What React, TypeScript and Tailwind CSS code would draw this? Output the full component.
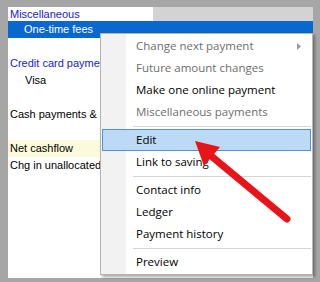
type MenuEntry =
  | { kind: 'item'; label: string; disabled?: boolean; active?: boolean; submenu?: boolean }
  | { kind: 'sep' };

const menu: MenuEntry[] = [
  { kind: 'item', label: 'Change next payment', disabled: true, submenu: true },
  { kind: 'item', label: 'Future amount changes', disabled: true },
  { kind: 'item', label: 'Make one online payment' },
  { kind: 'item', label: 'Miscellaneous payments', disabled: true },
  { kind: 'sep' },
  { kind: 'item', label: 'Edit', active: true },
  { kind: 'item', label: 'Link to saving' },
  { kind: 'sep' },
  { kind: 'item', label: 'Contact info' },
  { kind: 'item', label: 'Ledger' },
  { kind: 'item', label: 'Payment history' },
  { kind: 'sep' },
  { kind: 'item', label: 'Preview' },
];

function ContextMenu() {
  return (
    <div className="absolute left-[92px] top-[26px] w-[213px] h-[242px] border border-[#b4b4b4] bg-[linear-gradient(to_right,#f2f2f2_25px,#ffffff_25px)] py-[1px] shadow-[2px_2px_3px_rgba(0,0,0,0.35)] font-['Open_Sans',sans-serif] text-[11.5px]">
      {menu.map((entry, i) =>
        entry.kind === 'sep' ? (
          <div key={i} className="h-[6px] flex items-center pl-[32px] pr-[1px]">
            <div className="h-px w-full bg-[#d4d4d4]" />
          </div>
        ) : (
          <div
            key={i}
            className={`relative h-[22px] mx-[1px] flex items-center ${
              entry.active ? 'bg-[#bcdaf5] border border-[#4f92d6] pl-[33px]' : 'pl-[34px]'
            } ${entry.disabled ? 'text-[#6d6d6d]' : 'text-black'}`}
          >
            {entry.label}
            {entry.submenu && (
              <svg className="absolute right-[10px]" width="4" height="7" viewBox="0 0 4 7">
                <polygon points="0,0 4,3.5 0,7" fill="#9a9a9a" />
              </svg>
            )}
          </div>
        )
      )}
    </div>
  );
}

export default function App() {
  return (
    <div className="relative w-[320px] h-[282px] bg-[#a6a6a6] pt-[7px] pl-[8px] overflow-hidden">
      <div className="relative w-[305px] h-[271px] bg-white font-['Liberation_Sans',Arial,sans-serif] text-[11px]">
        {/* list rows */}
        <div className="flex h-[14px]">
          <div className="w-[145px] flex items-center pl-[2px] text-[#2020d0]">Miscellaneous</div>
          <div className="flex-1 bg-[#d3d3d3]" />
        </div>
        <div className="h-[17px] flex items-center pl-[16px] bg-[#0968cf] text-white">One-time fees</div>
        <div className="h-[17px]" />
        <div className="h-[17px] flex items-center pl-[2px] text-[#2020d0]">Credit card payments</div>
        <div className="h-[17px] flex items-center pl-[17px] text-black">Visa</div>
        <div className="h-[17px]" />
        <div className="h-[17px] flex items-center pl-[2px] text-black">Cash payments &amp; savings</div>
        <div className="h-[17px]" />
        <div className="h-[17px] flex items-center pl-[2px] text-black bg-[#fbfbdc]">Net cashflow</div>
        <div className="h-[17px] flex items-center pl-[2px] text-black">Chg in unallocated</div>

        <ContextMenu />
      </div>

      {/* red arrow */}
      <svg className="absolute inset-0 pointer-events-none" width="320" height="282" viewBox="0 0 320 282">
        <line x1="287" y1="219" x2="210" y2="155" stroke="#e8141a" strokeWidth="7" strokeLinecap="round" />
        <polygon points="195,141 220,147 204,166" fill="#e8141a" />
      </svg>
    </div>
  );
}
